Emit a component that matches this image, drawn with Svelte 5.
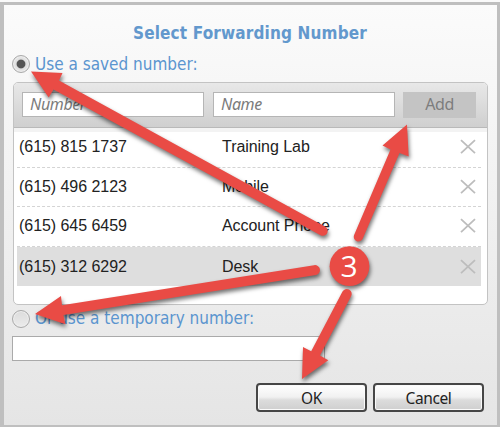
<script>
  let rows = $state([
    { number: '(615) 815 1737', name: 'Training Lab' },
    { number: '(615) 496 2123', name: 'Mobile' },
    { number: '(615) 645 6459', name: 'Account Phone' },
    { number: '(615) 312 6292', name: 'Desk' }
  ]);
  let selected = $state(3);
</script>

<div class="stage">
  <div class="dialog">
    <h1>Select Forwarding Number</h1>
    <div class="option">
      <span class="radio on"></span><span class="label">Use a saved number:</span>
    </div>
    <div class="panel">
      <div class="bar">
        <div class="field"><span class="hint">Number</span></div>
        <div class="field"><span class="hint">Name</span></div>
        <div class="add">Add</div>
      </div>
      <div class="rows">
        {#each rows as row, i}
          <div class="row" class:selected={i === selected}>
            <span class="num">{row.number}</span>
            <span class="who">{row.name}</span>
            <svg class="x" width="16" height="16" viewBox="0 0 16 16"><path d="M1 1.2 15 14.2M15 1.2 1 14.2" /></svg>
          </div>
        {/each}
      </div>
    </div>
    <div class="option second">
      <span class="radio"></span><span class="label">Or use a temporary number:</span>
    </div>
    <div class="field wide"></div>
    <div class="actions">
      <button>OK</button>
      <button>Cancel</button>
    </div>
  </div>

  <svg class="notes" width="500" height="427" viewBox="0 0 500 427">
    <g class="shadow">
      <path d="M31 71.5 62.5 73 59 80.5 325 226.5A4.6 4.6 0 0 1 320.5 235.3L53.5 89.5 48.7 97.5Z" />
      <path d="M407 124.5 408.7 156.5 399.5 153 362.8 238.5A4.7 4.7 0 0 1 354 235.2L390.5 149.5 382.5 145.5Z" />
      <path d="M35 314 61 296 62 305.3 314 265.2A4.8 4.8 0 0 1 316 275L63.5 315 65.3 324.3Z" />
      <path d="M302 379 303 347 311.2 351.3 342.5 291.6A4.8 4.8 0 0 1 351.2 296L320 355.5 328.3 360.3Z" />
      <circle cx="349.5" cy="266.2" r="19.9" />
    </g>
    <text x="349.2" y="277" text-anchor="middle">3</text>
  </svg>
</div>

<style>
  :global(body) { margin: 0; }
  .stage {
    position: relative;
    width: 500px;
    height: 427px;
    padding-top: 2px;
    box-sizing: border-box;
    overflow: hidden;
    background: #fafafa;
  }
  .dialog {
    box-sizing: border-box;
    height: 425px;
    padding: 14px 13px 0 8px;
    border: 3px solid #bfbfbf;
    border-left-width: 4px;
    border-bottom-width: 2px;
    background: linear-gradient(#fbfbfb, #e5e5e5);
    font-family: "DejaVu Sans Condensed", "DejaVu Sans", sans-serif;
    font-stretch: condensed;
  }
  h1 {
    margin: 0 0 0 -2px;
    width: 480px;
    height: 35px;
    padding-top: 3px;
    box-sizing: border-box;
    text-align: center;
    font-size: 17px;
    letter-spacing: 0.15px;
    line-height: 22px;
    color: #6298cd;
  }
  .option {
    display: flex;
    align-items: center;
    height: 20px;
    gap: 5px;
  }
  .radio {
    flex: none;
    width: 18px;
    height: 18px;
    box-sizing: border-box;
    border: 1px solid #a9a9a9;
    border-radius: 50%;
    background: linear-gradient(#dcdcdc, #ebebeb);
    box-shadow: inset 0 0 0 1px #eee;
  }
  .radio.on {
    background: radial-gradient(circle, #555 3.8px, #ddd 4.9px, #e3e3e3 6px);
  }
  .label {
    font-size: 17px;
    line-height: 20px;
    color: #5b95cf;
    white-space: nowrap;
  }
  .panel {
    width: 475px;
    margin: 8px 0 0 1px;
    height: 223px;
    box-sizing: border-box;
    border: 1px solid #c3c3c3;
    border-radius: 5px;
    background: #fff;
    overflow: hidden;
  }
  .bar {
    display: flex;
    box-sizing: border-box;
    height: 45px;
    padding: 9px 0 0 8px;
    gap: 9px;
    border-bottom: 1px solid #b9b9b9;
    background: linear-gradient(#e8e8e8, #cfcfcf);
  }
  .field {
    box-sizing: border-box;
    width: 182px;
    height: 25px;
    border: 1px solid #b5b5b5;
    background: #fff;
  }
  .hint {
    display: block;
    padding-left: 7px;
    font-family: "Noto Sans", sans-serif;
    font-stretch: normal;
    font-size: 16px;
    letter-spacing: -0.4px;
    font-style: italic;
    line-height: 22px;
    color: #7b7b7b;
  }
  .add {
    width: 73px;
    height: 26px;
    margin-left: -1px;
    background: #c4c4c4;
    color: #7d7d7d;
    font-family: "Noto Sans", sans-serif;
    font-stretch: normal;
    font-size: 16px;
    letter-spacing: -0.4px;
    line-height: 25px;
    text-align: center;
  }
  .rows {
    padding: 0 6px 0 3px;
    background: linear-gradient(#f3f3f3 4px, #fff 4px);
    font-family: "Liberation Sans", Arial, sans-serif;
    font-size: 16px;
    letter-spacing: -0.05px;
    color: #222;
  }
  .row {
    display: flex;
    align-items: center;
    box-sizing: border-box;
    height: 39.6px;
    padding: 0 5px 0 2px;
    border-bottom: 1px dashed #d4d4d4;
  }
  .row.selected { background: #dedede; border-bottom: 0; }
  .num { width: 203px; }
  .who { flex: 1; }
  .x { fill: none; stroke: #bdbdbd; stroke-width: 1.8; }
  .option.second { margin-top: 4px; }
  .option.second .label { margin-top: -2px; }
  .wide { width: 313px; margin-top: 7px; border-color: #aaa; }
  .actions {
    display: flex;
    justify-content: flex-end;
    gap: 6px;
    margin-top: 22px;
  }
  button {
    box-sizing: border-box;
    width: 111px;
    height: 29px;
    padding: 0;
    border: 2px solid #464646;
    border-radius: 4px;
    background: linear-gradient(#fff 0%, #f1f1f1 48%, #dcdcdc 60%, #cfcfcf 100%);
    box-shadow: inset 0 0 0 1px #fafafa;
    font: 15.5px/24px "Noto Sans", sans-serif;
    letter-spacing: -0.4px;
    color: #222;
  }
  .notes { position: absolute; left: 0; top: 0; }
  .shadow { fill: #e94b45; filter: drop-shadow(1px 3px 2px rgba(0, 0, 0, 0.55)); }
  .notes text { fill: #fff; font: 30px "Open Sans", "Noto Sans", sans-serif; }
</style>
